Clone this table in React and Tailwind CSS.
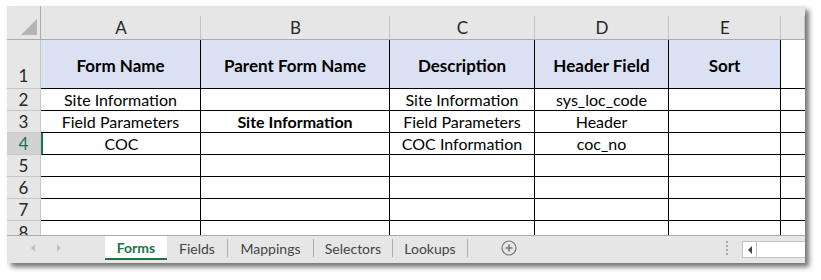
import React from 'react';

const cols = ['A', 'B', 'C', 'D', 'E', ''];

const rows = [
  { n: 2, cells: ['Site Information', '', 'Site Information', 'sys_loc_code', '', ''] },
  { n: 3, cells: ['Field Parameters', 'Site Information', 'Field Parameters', 'Header', '', ''], bold: 1 },
  { n: 4, cells: ['COC', '', 'COC Information', 'coc_no', '', ''], selected: true },
  { n: 5, cells: ['', '', '', '', '', ''] },
  { n: 6, cells: ['', '', '', '', '', ''] },
  { n: 7, cells: ['', '', '', '', '', ''] },
];

const headers = ['Form Name', 'Parent Form Name', 'Description', 'Header Field', 'Sort'];

const tabs = ['Forms', 'Fields', 'Mappings', 'Selectors', 'Lookups'];

function RowHead({ n, selected, tall }) {
  return (
    <div
      className={`flex justify-center border-b border-r border-[#c8c8c8] text-[17px] leading-none ${
        tall ? 'items-end pb-[4px]' : 'items-center'
      } ${selected ? 'bg-[#d2d2d2] text-[#217346]' : 'bg-[#e6e6e6] text-[#262626]'}`}
    >
      {n}
    </div>
  );
}

export default function App() {
  return (
    <div className="h-[280px] w-[821px] bg-white pl-[7px] pt-[6px] font-['Lato','Open_Sans',sans-serif]">
      <div className="flex h-[257px] w-[798px] flex-col overflow-hidden bg-[#e6e6e6] shadow-[4px_4px_5px_rgba(0,0,0,0.55)]">
        {/* grid */}
        <div className="grid h-[229px] grid-cols-[34px_160px_189px_145px_134px_112px_24px] grid-rows-[34px_49px_22px_22px_22px_22px_22px_22px_14px] overflow-hidden bg-white">
          {/* column letters */}
          <div className="relative border-b border-r border-[#ababab] bg-[#e6e6e6]">
            <div className="absolute bottom-[4px] right-[3px] h-0 w-0 border-b-[16px] border-l-[16px] border-b-[#b4b4b4] border-l-transparent" />
          </div>
          {cols.map((c, i) => (
            <div key={i} className="relative flex items-end justify-center border-b border-[#ababab] bg-[#e6e6e6] pb-[3px] text-[17px] leading-none text-[#262626]">
              <span className="absolute bottom-0 right-0 top-[10px] w-px bg-[#c4c4c4]" />
              {c}
            </div>
          ))}

          {/* row 1 */}
          <RowHead n={1} tall />
          {headers.map((h) => (
            <div key={h} className="flex items-center justify-center border-b border-r border-black bg-[#d9e1f2] pt-[3px] text-[17px] font-bold text-black">
              {h}
            </div>
          ))}
          <div className="border-b border-black bg-white" />

          {rows.map((r) => (
            <React.Fragment key={r.n}>
              <RowHead n={r.n} selected={r.selected} />
              {r.cells.map((t, i) => (
                <div
                  key={i}
                  className={`flex items-center justify-center border-b border-black text-[16px] leading-none text-black ${
                    i < 5 ? 'border-r' : ''
                  } ${r.bold === i ? 'font-bold' : ''} ${r.selected && i === 0 ? 'border-l-2 border-l-[#217346]' : ''}`}
                >
                  {t}
                </div>
              ))}
            </React.Fragment>
          ))}

          {/* row 8 (cut) */}
          <div className="flex items-start justify-center overflow-hidden border-r border-[#c8c8c8] bg-[#e6e6e6] pt-[3px] text-[17px] leading-none text-[#262626]">
            8
          </div>
          {cols.map((c, i) => (
            <div key={i} className={`${i < 5 ? 'border-r' : ''} border-black`} />
          ))}
        </div>

        {/* sheet tabs */}
        <div className="flex h-[28px] items-start border-t border-[#ababab] bg-[#e6e6e6] text-[14px] text-[#444]">
          <div className="flex h-[24px] w-[98px] items-center pl-[24px] gap-[22px]">
            <span className="h-0 w-0 border-y-[4px] border-r-[4px] border-y-transparent border-r-[#c0c0c0]" />
            <span className="h-0 w-0 border-y-[4px] border-l-[4px] border-y-transparent border-l-[#c0c0c0]" />
          </div>
          <div className="flex h-[24px] w-[62px] items-center justify-center border-b-2 border-[#217346] bg-white font-bold text-[#217346]">
            Forms
          </div>
          {tabs.slice(1).map((t, i) => (
            <div key={t} className="flex h-[24px] items-center">
              <div className={`flex items-center justify-center ${['w-[60px]', 'w-[85px]', 'w-[78px]', 'w-[74px]'][i]}`}>{t}</div>
              <span className="h-[18px] w-px bg-[#b0b0b0]" />
            </div>
          ))}
          <div className="flex h-[24px] w-[82px] items-center justify-center">
            <svg width="16" height="16" viewBox="0 0 16 16" fill="none" stroke="#777" strokeWidth="1.2">
              <circle cx="8" cy="8" r="7" />
              <path d="M8 4.5v7M4.5 8h7" strokeWidth="1.6" />
            </svg>
          </div>
          <div className="flex-1" />
          <div className="flex h-[24px] flex-col justify-center gap-[2px] pr-[14px]">
            <span className="h-[2px] w-[2px] bg-[#a8a8a8]" />
            <span className="h-[2px] w-[2px] bg-[#a8a8a8]" />
            <span className="h-[2px] w-[2px] bg-[#a8a8a8]" />
            <span className="h-[2px] w-[2px] bg-[#a8a8a8]" />
          </div>
          <div className="mt-[5px] flex h-[17px] w-[63px] items-stretch border border-r-0 border-[#c2c2c2] bg-white">
            <div className="flex w-[14px] items-center justify-center border-r border-[#c2c2c2]">
              <span className="h-0 w-0 border-y-[4px] border-r-[4px] border-y-transparent border-r-[#444]" />
            </div>
          </div>
        </div>
      </div>
    </div>
  );
}
